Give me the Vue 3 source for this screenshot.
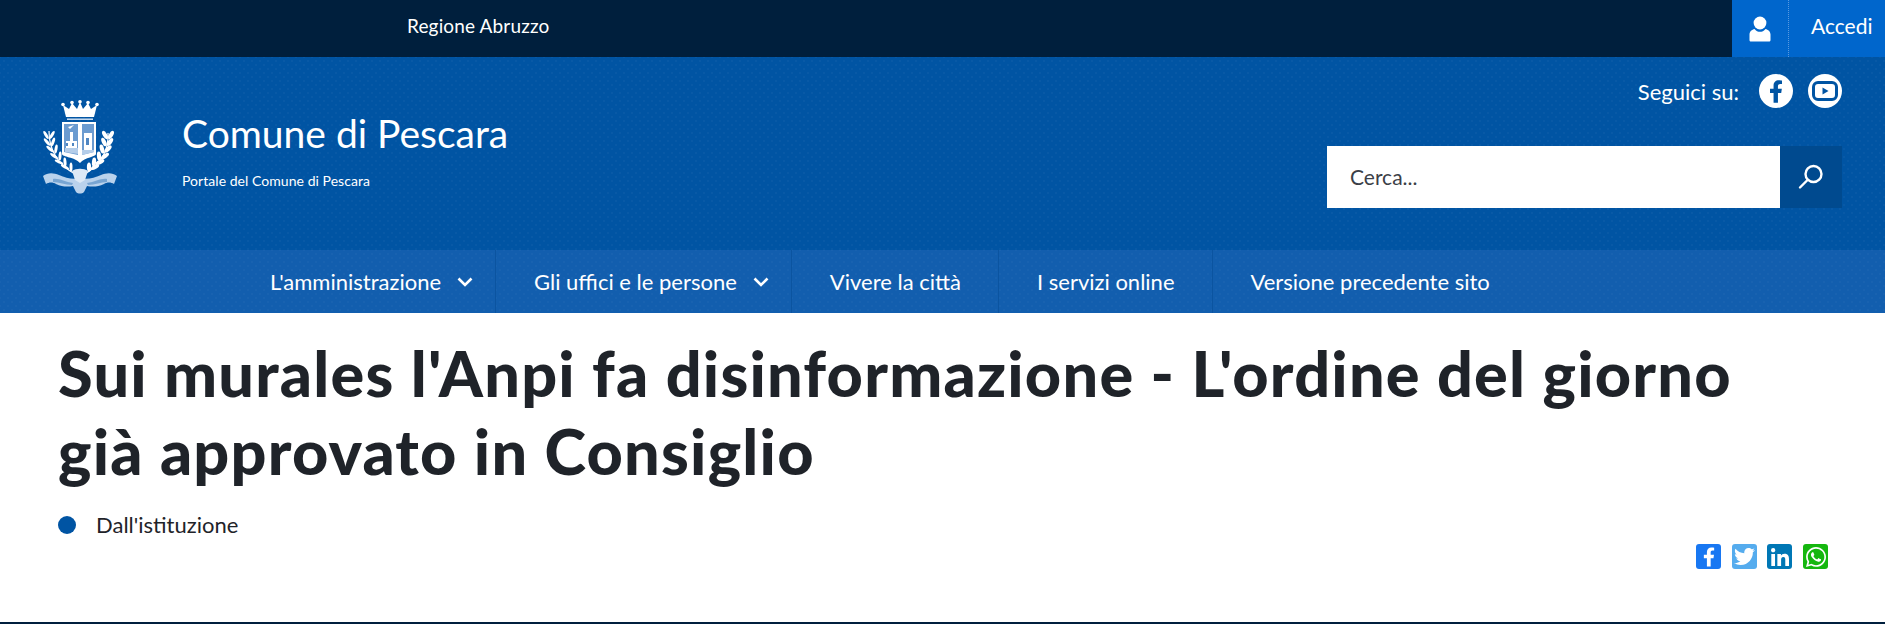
<script setup>
const menu = [
  { label: "L'amministrazione", arrow: true },
  { label: 'Gli uffici e le persone', arrow: true },
  { label: 'Vivere la città' },
  { label: 'I servizi online' },
  { label: 'Versione precedente sito' }
]

// foglie della corona d'alloro nello stemma
const leavesLeft = [
  [25, 69, 60], [19, 64, 55], [14, 58, 65], [10, 51, 70], [7, 44, 80], [6, 37, 90]
]
const leavesRight = [
  [49, 69, -60], [54, 64, -55], [59, 58, -65], [62, 51, -75], [64, 44, -85], [65, 37, -90]
]
</script>

<template>
  <div class="page">
    <div class="top-bar">
      <span class="region">Regione Abruzzo</span>
      <div class="login">
        <span class="login-icon">
          <svg width="22" height="26" viewBox="0 0 22 26">
            <circle cx="11" cy="7" r="6.4" fill="#fff" />
            <path d="M0.5 24V18.5C0.5 15.5 3 13.6 5.5 13C7 15 9 15.8 11 15.8S15 15 16.5 13C19 13.6 21.5 15.5 21.5 18.5V24C21.5 25 20.8 25.6 20 25.6H2C1.2 25.6 .5 25 .5 24Z" fill="#fff" />
          </svg>
        </span>
        <span class="login-text">Accedi</span>
      </div>
    </div>

    <header class="header">
      <div class="brand">
        <svg class="crest" width="74" height="94" viewBox="0 0 74 94">
          <!-- corona -->
          <path d="M20 5l6 4 3-6 5 6 3-7 3 7 5-6 3 6 6-4-3 12H23z" fill="#fff" />
          <g fill="#fff">
            <circle cx="20" cy="4.5" r="1.8" />
            <circle cx="29" cy="2.5" r="1.8" />
            <circle cx="37" cy="1.8" r="1.8" />
            <circle cx="45" cy="2.5" r="1.8" />
            <circle cx="54" cy="4.5" r="1.8" />
          </g>
          <path d="M24 18.5h26v1.4H24z" fill="#dce9f6" />
          <!-- scudo -->
          <path d="M19 22h34v32c0 3-11 3-16 9-5-6-18-6-18-9z" fill="#fff" />
          <path d="M21 24h14v31l-14-3z" fill="#6b9bd0" />
          <path d="M39 24h12v28l-12 3z" fill="#6b9bd0" />
          <path d="M23 41h11v7H23zM27 32h3v9h-3zM25 27l6-2-4 4z" fill="#fff" />
          <path d="M41 33h8v17h-8z" fill="#fff" />
          <path d="M43 38h3v7h-3zM23 43h2v3h-2zM29 43h2v3h-2z" fill="#4f86c2" />
          <path d="M22 48h13v6l-13-2zM39 50h12v2l-12 3z" fill="#b4cde9" />
          <!-- alloro -->
          <path d="M6 31C6 50 14 64 32 74" fill="none" stroke="#fff" stroke-width="1.2" />
          <path d="M65 33C66 50 58 64 42 74" fill="none" stroke="#fff" stroke-width="1.2" />
          <g fill="#fff">
            <template v-for="(l, i) in leavesLeft" :key="'l' + i">
              <ellipse :cx="l[0] - 3" :cy="l[1] - 2" rx="4.6" ry="1.5" :transform="`rotate(${l[2] - 30} ${l[0] - 3} ${l[1] - 2})`" />
              <ellipse :cx="l[0] + 3" :cy="l[1] - 2" rx="4.6" ry="1.5" :transform="`rotate(${l[2] + 30} ${l[0] + 3} ${l[1] - 2})`" />
            </template>
            <template v-for="(l, i) in leavesRight" :key="'r' + i">
              <ellipse :cx="l[0] - 3" :cy="l[1] - 2" rx="4.6" ry="2.1" :transform="`rotate(${l[2] - 30} ${l[0] - 3} ${l[1] - 2})`" />
              <ellipse :cx="l[0] + 3" :cy="l[1] - 2" rx="4.6" ry="2.1" :transform="`rotate(${l[2] + 30} ${l[0] + 3} ${l[1] - 2})`" />
            </template>
          </g>
          <!-- nastro -->
          <path d="M0 76c5-4 11-3 16-1 7 3 14 5 21 3 7 2 14 0 21-3 5-2 11-3 16 1l-3 8c-3-2-7-2-10 0-6 3-12 3-17 2l-3 6c-2 2-6 2-8 0l-3-6c-5 1-11 1-17-2-3-2-7-2-10 0z" fill="#b9d2ec" />
          <path d="M10 79c6-1 12 3 20 4l-1 2c-7 0-13-3-19-3zM64 79c-6-1-12 3-20 4l1 2c7 0 13-3 19-3z" fill="#0054a3" opacity=".35" />
          <path d="M29 71c4-3 12-3 16 0l-3 9-5 3-5-3z" fill="#dce9f6" />
        </svg>
        <div class="brand-text">
          <div class="site-name">Comune di Pescara</div>
          <div class="site-sub">Portale del Comune di Pescara</div>
        </div>
      </div>

      <div class="header-right">
        <div class="social">
          <span class="social-label">Seguici su:</span>
          <span class="social-circle">
            <svg width="14" height="23" viewBox="0 0 320 512"><path fill="#0054a3" d="M279.14 288l14.22-92.66h-88.91v-60.13c0-25.35 12.42-50.06 52.24-50.06h40.42V6.26S260.43 0 225.36 0c-73.22 0-121.08 44.38-121.08 124.72v70.62H22.89V288h81.39v224h100.17V288z" /></svg>
          </span>
          <span class="social-circle">
            <svg width="26" height="20" viewBox="0 0 26 20">
              <rect x="1.5" y="1.5" width="23" height="17" rx="4.5" fill="none" stroke="#0054a3" stroke-width="3" />
              <path d="M10.5 6.5l6 3.5-6 3.5z" fill="#0054a3" />
            </svg>
          </span>
        </div>
        <div class="search">
          <div class="search-input">Cerca...</div>
          <div class="search-btn">
            <svg width="26" height="26" viewBox="0 0 26 26" fill="none" stroke="#fff" stroke-width="2.4">
              <circle cx="15.5" cy="10" r="8" />
              <path d="M9.5 16L2 23.5" stroke-linecap="round" />
            </svg>
          </div>
        </div>
      </div>
    </header>

    <nav class="nav">
      <div v-for="item in menu" :key="item.label" class="nav-item" :class="{ 'has-arrow': item.arrow }">
        <span>{{ item.label }}</span>
        <svg v-if="item.arrow" class="chevron" width="16" height="10" viewBox="0 0 16 10" fill="none" stroke="#fff" stroke-width="2.6">
          <path d="M1.5 1.5L8 8l6.5-6.5" />
        </svg>
      </div>
    </nav>

    <main class="content">
      <h1 class="title">Sui murales l'Anpi fa disinformazione - L'ordine del giorno già approvato in Consiglio</h1>
      <div class="category">
        <span class="dot"></span>
        <span>Dall'istituzione</span>
      </div>
      <div class="share">
        <span class="share-btn fb">
          <svg width="12" height="20" viewBox="0 0 320 512"><path fill="#fff" d="M279.14 288l14.22-92.66h-88.91v-60.13c0-25.35 12.42-50.06 52.24-50.06h40.42V6.26S260.43 0 225.36 0c-73.22 0-121.08 44.38-121.08 124.72v70.62H22.89V288h81.39v224h100.17V288z" /></svg>
        </span>
        <span class="share-btn tw">
          <svg width="21" height="21" viewBox="0 0 512 512"><path fill="#fff" d="M459.37 151.716c.325 4.548.325 9.097.325 13.645 0 138.72-105.583 298.558-298.558 298.558-59.452 0-114.68-17.219-161.137-47.106 8.447.974 16.568 1.299 25.34 1.299 49.055 0 94.213-16.568 130.274-44.832-46.132-.975-84.792-31.188-98.112-72.772 6.498.974 12.995 1.624 19.818 1.624 9.421 0 18.843-1.3 27.614-3.573-48.081-9.747-84.143-51.98-84.143-102.985v-1.299c13.969 7.797 30.214 12.67 47.431 13.319-28.264-18.843-46.781-51.005-46.781-87.391 0-19.492 5.197-37.36 14.294-52.954 51.655 63.675 129.3 105.258 216.365 109.807-1.624-7.797-2.599-15.918-2.599-24.04 0-57.828 46.782-104.934 104.934-104.934 30.213 0 57.502 12.67 76.67 33.137 23.715-4.548 46.456-13.32 66.599-25.34-7.798 24.366-24.366 44.833-46.132 57.827 21.117-2.273 41.584-8.122 60.426-16.243-14.292 20.791-32.161 39.308-52.628 54.253z" /></svg>
        </span>
        <span class="share-btn li">
          <svg width="18" height="18" viewBox="0 0 448 448"><path fill="#fff" d="M100.28 448H7.4V148.9h92.88zM53.79 108.1C24.09 108.1 0 83.5 0 53.8a53.79 53.79 0 0 1 107.58 0c0 29.7-24.1 54.3-53.79 54.3zM447.9 448h-92.68V302.4c0-34.7-.7-79.2-48.29-79.2-48.29 0-55.69 37.7-55.69 76.7V448h-92.78V148.9h89.08v40.8h1.3c12.4-23.5 42.69-48.3 87.88-48.3 94 0 111.28 61.9 111.28 142.3V448z" /></svg>
        </span>
        <span class="share-btn wa">
          <svg width="20" height="20" viewBox="0 32 448 448"><path fill="#fff" d="M380.9 97.1C339 55.1 283.2 32 223.9 32c-122.4 0-222 99.6-222 222 0 39.1 10.2 77.3 29.6 111L0 480l117.7-30.9c32.4 17.7 68.9 27 106.1 27h.1c122.3 0 224.1-99.6 224.1-222 0-59.3-25.2-115-67.1-157zm-157 341.6c-33.2 0-65.7-8.9-94-25.7l-6.7-4-69.8 18.3L72 359.2l-4.4-7c-18.5-29.4-28.2-63.3-28.2-98.2 0-101.7 82.8-184.5 184.6-184.5 49.3 0 95.6 19.2 130.4 54.1 34.8 34.9 56.2 81.2 56.1 130.5 0 101.8-84.9 184.6-186.6 184.6zm101.2-138.2c-5.5-2.8-32.8-16.2-37.9-18-5.1-1.9-8.8-2.8-12.5 2.8-3.7 5.6-14.3 18-17.6 21.8-3.2 3.7-6.5 4.2-12 1.4-32.6-16.3-54-29.1-75.5-66-5.7-9.8 5.7-9.1 16.3-30.3 1.8-3.7.9-6.9-.5-9.7-1.4-2.8-12.5-30.1-17.1-41.2-4.5-10.8-9.1-9.3-12.5-9.5-3.2-.2-6.9-.2-10.6-.2-3.7 0-9.7 1.4-14.8 6.9-5.1 5.6-19.4 19-19.4 46.3 0 27.3 19.9 53.7 22.6 57.4 2.8 3.7 39.1 59.7 94.8 83.8 35.2 15.2 49 16.5 66.6 13.9 10.7-1.6 32.8-13.4 37.4-26.4 4.6-13 4.6-24.1 3.2-26.4-1.3-2.5-5-3.9-10.5-6.6z" /></svg>
        </span>
      </div>
    </main>

    <div class="bottom-line"></div>
  </div>
</template>

<style>
html, body {
  margin: 0;
  background: #fff;
  overflow: hidden;
}
</style>

<style scoped>
.page {
  height: 624px;
  display: flex;
  flex-direction: column;
  font-family: Lato, "Noto Sans", sans-serif;
  color: #1f2329;
}

.top-bar {
  height: 57px;
  background: #001f3d;
  display: flex;
  align-items: center;
  justify-content: space-between;
  padding-left: 407px;
  color: #fff;
}

.region {
  font-size: 19px;
  letter-spacing: 0.15px;
  padding-bottom: 6px;
}

.login {
  height: 57px;
  width: 153px;
  background: #0066cc;
  display: flex;
  align-items: center;
}

.login-icon {
  width: 56px;
  height: 57px;
  display: flex;
  align-items: center;
  justify-content: center;
  border-right: 1px dotted #5a9ae0;
}

.login-text {
  font-size: 21px;
  margin-left: 22px;
  padding-bottom: 6px;
}

.header {
  height: 193px;
  background-color: #0054a3;
  background-image:
    radial-gradient(rgba(255, 255, 255, 0.03) 1px, transparent 1px),
    radial-gradient(rgba(255, 255, 255, 0.03) 1px, transparent 1px);
  background-size: 8px 8px;
  background-position: 0 0, 4px 4px;
  display: flex;
  justify-content: space-between;
  color: #fff;
}

.brand {
  display: flex;
  align-items: flex-start;
  padding: 43px 0 0 43px;
}

.brand-text {
  margin-left: 65px;
  padding-top: 10px;
}

.site-name {
  font-size: 39px;
  line-height: 46px;
}

.site-sub {
  font-size: 14px;
  line-height: 18px;
  margin-top: 16px;
  letter-spacing: 0.05px;
}

.header-right {
  width: 515px;
  padding: 17px 43px 0 0;
  display: flex;
  flex-direction: column;
  align-items: flex-end;
}

.social {
  display: flex;
  align-items: center;
  height: 34px;
}

.social-label {
  font-size: 22px;
  margin-right: 20px;
}

.social-circle {
  width: 34px;
  height: 34px;
  border-radius: 50%;
  background: #fff;
  margin-left: 15px;
  display: flex;
  align-items: center;
  justify-content: center;
}

.social-label + .social-circle {
  margin-left: 0;
}

.search {
  display: flex;
  width: 515px;
  height: 62px;
  margin-top: 38px;
}

.search-input {
  flex: 1;
  background: #fff;
  color: #3b4047;
  font-size: 21px;
  line-height: 62px;
  padding-left: 23px;
}

.search-btn {
  width: 62px;
  background: #004a8f;
  display: flex;
  align-items: center;
  justify-content: center;
}

.nav {
  height: 63px;
  background-color: #125eae;
  background-image:
    radial-gradient(rgba(255, 255, 255, 0.025) 1px, transparent 1px),
    radial-gradient(rgba(255, 255, 255, 0.025) 1px, transparent 1px);
  background-size: 8px 8px;
  background-position: 0 0, 4px 4px;
  display: flex;
  padding-left: 232px;
  color: #fff;
}

.nav-item {
  display: flex;
  align-items: center;
  padding: 0 37px 0 38px;
  border-right: 1px solid #0b54a0;
  font-size: 22px;
}

.nav-item.has-arrow {
  padding-right: 22px;
}

.nav-item:last-child {
  border-right: 0;
}

.chevron {
  margin-left: 16px;
}

.content {
  flex: 1;
  padding: 0 57px 0 58px;
}

.title {
  margin: 21px 0 0;
  max-width: 1720px;
  font-size: 63px;
  line-height: 78px;
  font-weight: 900;
  letter-spacing: 1.2px;
  color: #1f2329;
}

.category {
  display: flex;
  align-items: center;
  margin-top: 20px;
  font-size: 22px;
  line-height: 30px;
}

.dot {
  width: 18px;
  height: 18px;
  border-radius: 50%;
  background: #0054a3;
  margin-right: 20px;
}

.share {
  display: flex;
  justify-content: flex-end;
  gap: 10.67px;
  margin-top: 4px;
}

.share-btn {
  width: 25px;
  height: 25px;
  border-radius: 3px;
  display: flex;
  align-items: center;
  justify-content: center;
}

.fb { background: #1877f2; }
.tw { background: #55acee; }
.li { background: #0077b5; }
.wa { background: #15b70f; }

.bottom-line {
  height: 2px;
  background: #001f3d;
}
</style>
